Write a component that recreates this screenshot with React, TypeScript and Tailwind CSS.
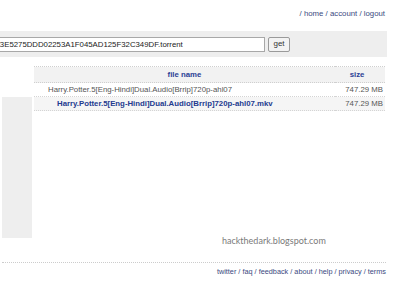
import React from 'react';

const files = [
  { name: 'Harry.Potter.5[Eng-Hindi]Dual.Audio[Brrip]720p-ahl07', size: '747.29 MB', folder: true },
  { name: 'Harry.Potter.5[Eng-Hindi]Dual.Audio[Brrip]720p-ahl07.mkv', size: '747.29 MB', folder: false },
];

export default function App() {
  return (
    <div className="w-[400px] h-[284px] overflow-hidden bg-white font-['Liberation_Sans',Arial,sans-serif] text-[7.8px] leading-[10px]">
      {/* top links */}
      <div className="h-[31px] flex justify-end items-start pt-[9px] pr-[15px] text-[#3b4a80]">
        / home / account / logout
      </div>

      {/* torrent url bar */}
      <div className="h-[26px] mr-[13px] bg-[#eeeeee] flex items-center gap-[3px] overflow-hidden">
        <input
          readOnly
          value="8A1D03E5275DDD02253A1F045AD125F32C349DF.torrent"
          className="ml-[-27px] w-[292px] h-[15px] shrink-0 border border-[#a8a8a8] bg-white px-[2px] text-[7.8px] text-[#222] outline-none font-['Liberation_Sans',Arial,sans-serif]"
        />
        <button className="w-[22px] h-[15px] border border-[#9a9a9a] rounded-[2px] bg-[#f3f3f3] text-[8px] text-[#333] leading-[12px]">
          get
        </button>
      </div>

      {/* main */}
      <div className="h-[205px] flex">
        <div className="w-[34px] shrink-0 pl-[2px]">
          <div className="mt-[40px] w-[30px] h-[141px] bg-[#eeeeee]" />
        </div>
        <div className="flex-1 mr-[15px] flex flex-col pt-[9px]">
          <table className="w-full border-collapse">
            <thead>
              <tr className="h-[16px] bg-[#f2f2f2] border-y border-dotted border-[#cfcfcf]">
                <th className="text-center font-bold text-[#2c3f95]">file name</th>
                <th className="w-[50px] text-center font-bold text-[#2c3f95] pr-[6px]">size</th>
              </tr>
            </thead>
            <tbody>
              {files.map((f) => (
                <tr
                  key={f.name}
                  className={`h-[14px] border-b border-dotted border-[#d4d4d4] ${f.folder ? 'bg-white' : 'bg-[#f5f5f5]'}`}
                >
                  <td
                    className={
                      f.folder
                        ? 'pl-[14px] text-left text-[#555]'
                        : 'pl-[23px] text-left font-bold text-[#233a8f]'
                    }
                  >
                    {f.name}
                  </td>
                  <td className="pr-[2px] text-right text-[#555]">{f.size}</td>
                </tr>
              ))}
            </tbody>
          </table>
          <div className="mt-auto mb-[15px] ml-[188px] font-['Lato',sans-serif] text-[9px] leading-[12px] text-[#7a7a7a]">
            hackthedark.blogspot.com
          </div>
        </div>
      </div>

      {/* footer */}
      <div className="ml-[2px] mr-[14px] border-t border-dotted border-[#cccccc] pt-[4px] flex justify-end text-[7.3px] text-[#3b4a80]">
        twitter / faq / feedback / about / help / privacy / terms
      </div>
    </div>
  );
}
